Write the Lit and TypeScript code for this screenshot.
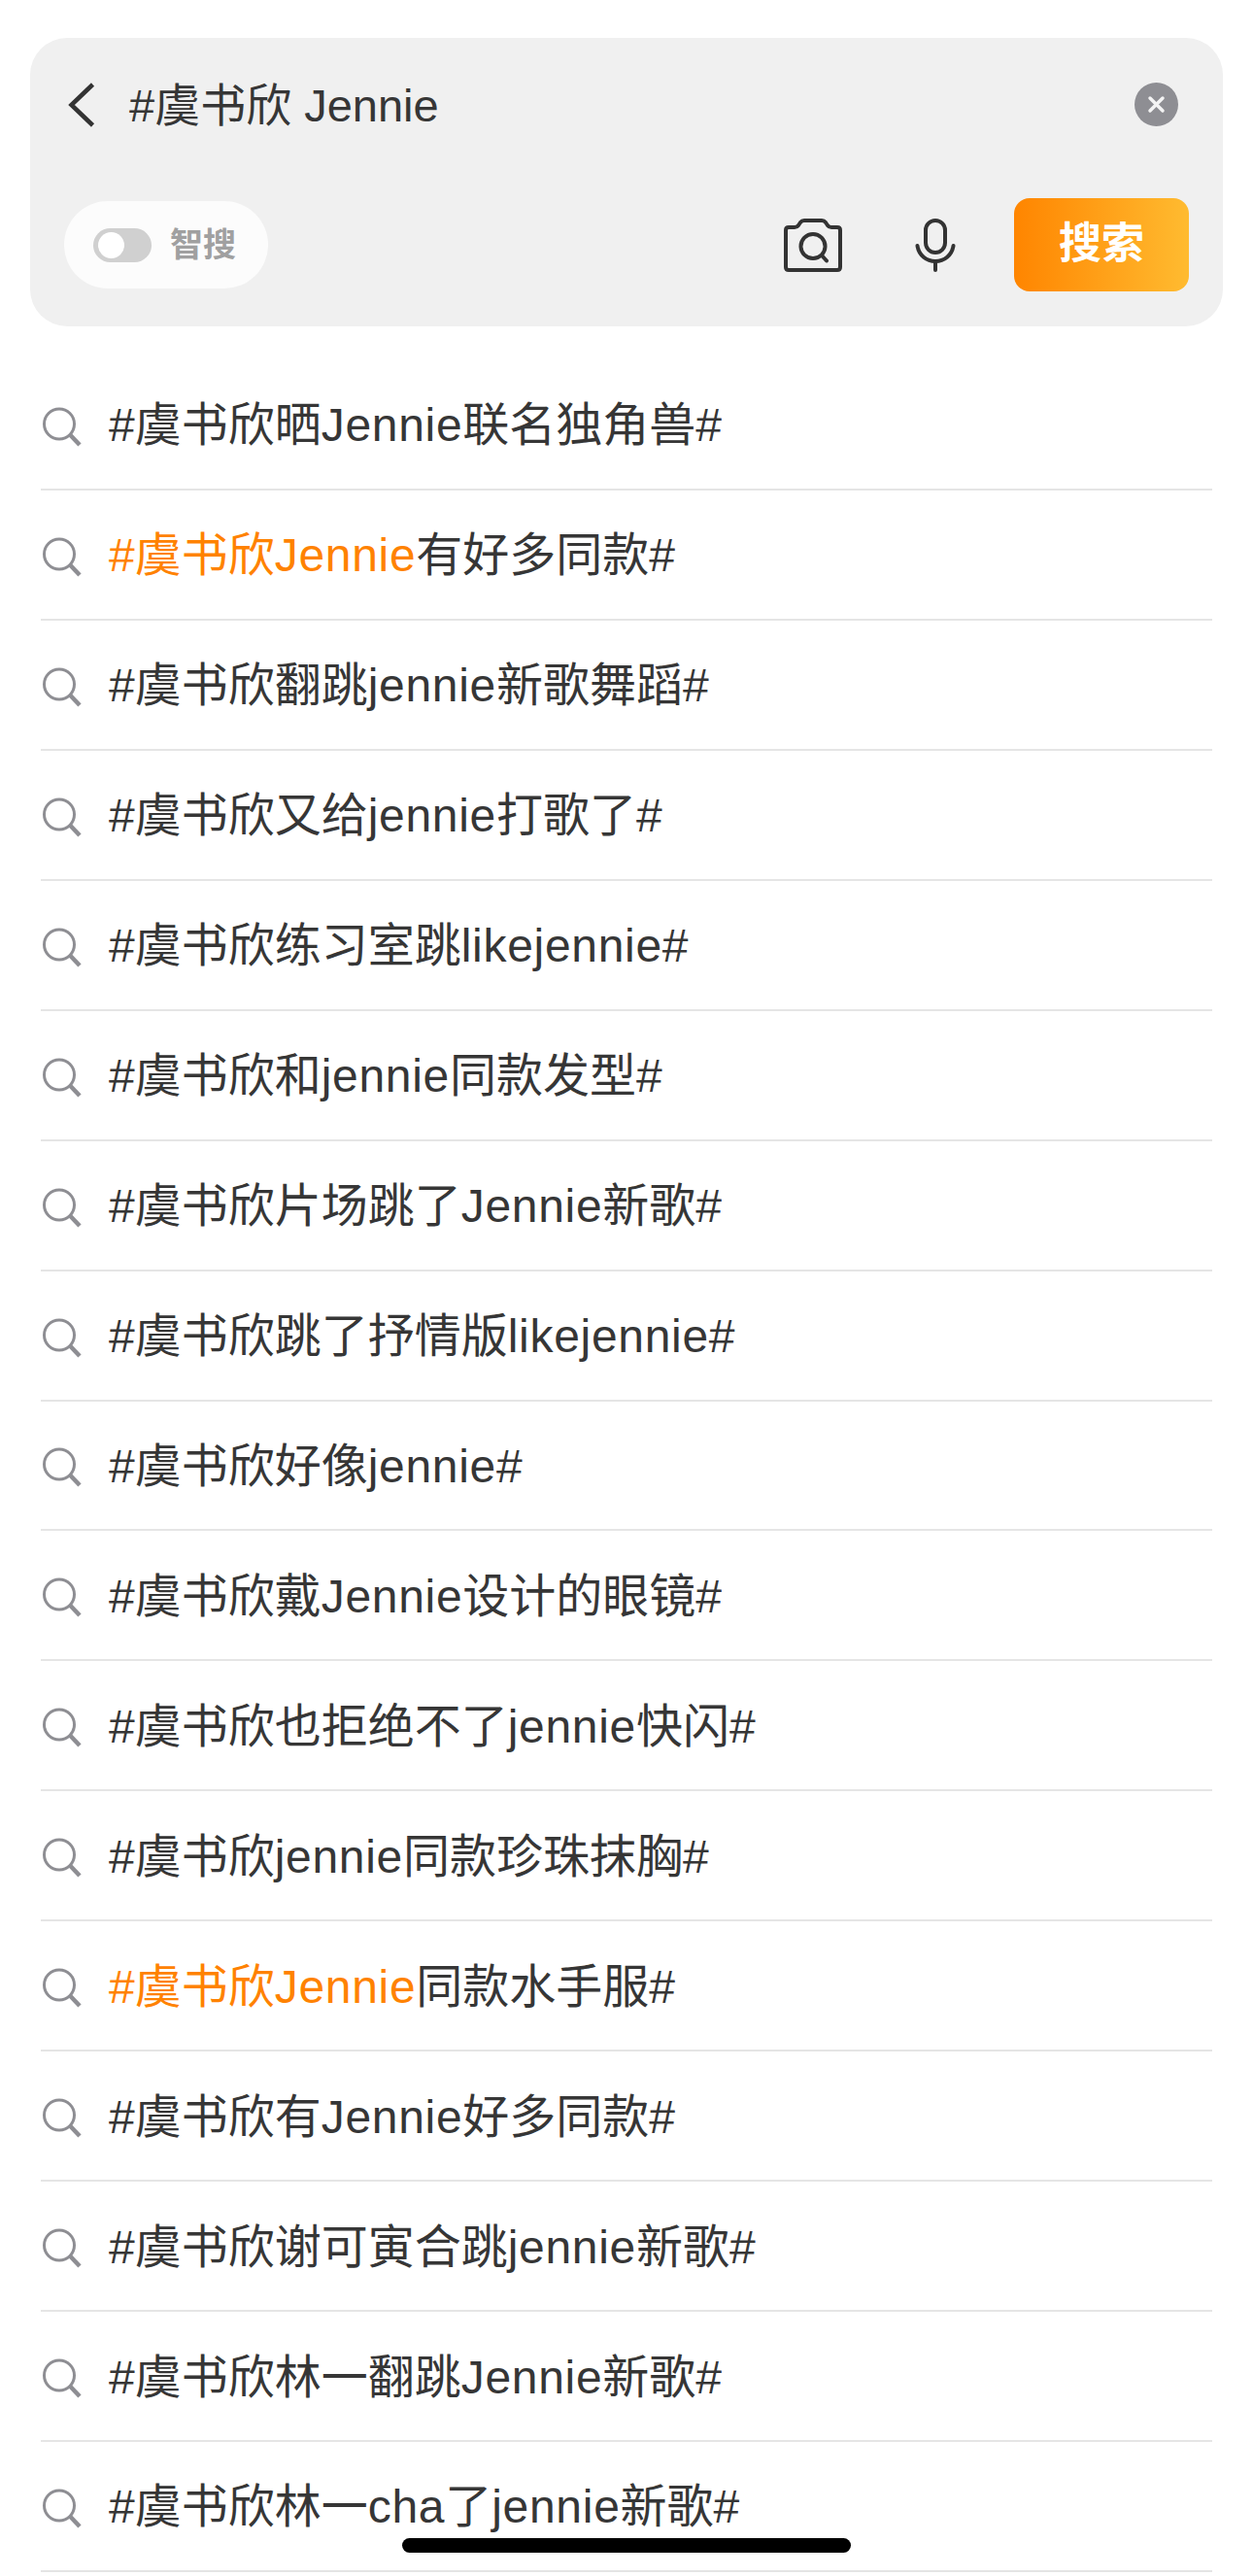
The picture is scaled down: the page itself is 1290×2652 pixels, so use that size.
import { LitElement, html, css, svg } from "lit";
import { customElement } from "lit/decorators.js";

type Item = { hi?: string; text: string };
const items: Item[] = [
  { text: "#虞书欣晒Jennie联名独角兽#" },
  { hi: "#虞书欣Jennie", text: "有好多同款#" },
  { text: "#虞书欣翻跳jennie新歌舞蹈#" },
  { text: "#虞书欣又给jennie打歌了#" },
  { text: "#虞书欣练习室跳likejennie#" },
  { text: "#虞书欣和jennie同款发型#" },
  { text: "#虞书欣片场跳了Jennie新歌#" },
  { text: "#虞书欣跳了抒情版likejennie#" },
  { text: "#虞书欣好像jennie#" },
  { text: "#虞书欣戴Jennie设计的眼镜#" },
  { text: "#虞书欣也拒绝不了jennie快闪#" },
  { text: "#虞书欣jennie同款珍珠抹胸#" },
  { hi: "#虞书欣Jennie", text: "同款水手服#" },
  { text: "#虞书欣有Jennie好多同款#" },
  { text: "#虞书欣谢可寅合跳jennie新歌#" },
  { text: "#虞书欣林一翻跳Jennie新歌#" },
  { text: "#虞书欣林一cha了jennie新歌#" },
];

const runs = (s: string) =>
  s.split(/([A-Za-z]+)/).map((p) => (/^[A-Za-z]+$/.test(p) ? html`<span class="latin">${p}</span>` : p));

const searchIcon = svg`<svg class="glass" width="42" height="42" viewBox="0 0 42 42" fill="none" stroke="#8e8e93" stroke-width="3">
  <circle cx="17" cy="17.500" r="15.500"/><path d="M28.500 29 L38 39" stroke-width="4.500"/></svg>`;

@customElement("app-root")
export class AppRoot extends LitElement {
  static styles = css`
    :host {
      display: block;
      position: relative;
      width: 1290px;
      height: 2652px;
      overflow: hidden;
      background: #fff;
      box-sizing: border-box;
      padding-top: 39px;
      font-family: "Liberation Sans", "Noto Sans CJK SC", sans-serif;
      color: #363636;
    }
    .panel {
      margin: 0 31px;
      height: 297px;
      box-sizing: border-box;
      padding: 46px 35px 36px;
      background: #f0f0f0;
      border-radius: 38px;
      display: flex;
      flex-direction: column;
      justify-content: space-between;
    }
    .top {
      display: flex;
      align-items: center;
      height: 45px;
    }
    .back { margin-left: 4px; flex: none; }
    .query {
      margin-left: 35px;
      padding-top: 2px;
      flex: 1;
      font-size: 47px;
      line-height: 45px;
      white-space: pre;
    }
    .clear { margin-right: 11px; flex: none; }
    .bottom {
      display: flex;
      align-items: center;
      height: 96px;
    }
    .pill {
      width: 210px;
      height: 90px;
      box-sizing: border-box;
      padding-left: 30px;
      border-radius: 45px;
      background: #fcfcfc;
      display: flex;
      align-items: center;
      gap: 19px;
    }
    .toggle {
      width: 60px;
      height: 35px;
      box-sizing: border-box;
      padding: 4px 5px;
      border-radius: 18px;
      background: #d0d0d0;
    }
    .knob {
      width: 27px;
      height: 27px;
      border-radius: 50%;
      background: #fff;
    }
    .pill-label {
      font-size: 34px;
      font-weight: 700;
      color: #a0a0a0;
      line-height: 40px;
    }
    .spacer { flex: 1; }
    .camera { flex: none; margin-right: 75px; }
    .mic { flex: none; margin-right: 60px; }
    .go {
      width: 180px;
      height: 96px;
      border-radius: 16px;
      background: linear-gradient(90deg, #ff8500, #ffbb30);
      color: #fff;
      font-size: 44px;
      font-weight: 700;
      line-height: 94px;
      text-align: center;
    }
    .list {
      margin: 35px 42px 0;
    }
    .row {
      height: 133.94px;
      box-sizing: border-box;
      border-bottom: 2px solid #e5e5e5;
      display: flex;
      align-items: center;
      padding-left: 2px;
    }
    .glass { flex: none; margin: 6px 26px 0 0; }
    .text {
      font-size: 48px;
      white-space: pre;
      line-height: 60px;
      padding-top: 3px;
    }
    .latin { letter-spacing: 0.7px; }
    .hi { color: #ff8200; }
    .home {
      position: absolute;
      left: 414px;
      top: 2613px;
      width: 462px;
      height: 15px;
      border-radius: 8px;
      background: #000;
    }
  `;

  render() {
    return html`
      <div class="panel">
        <div class="top">
          <svg class="back" width="28" height="46" viewBox="0 0 28 46" fill="none" stroke="#333" stroke-width="4.500">
            <path d="M25.500 2 L3.500 23 L25.500 44" />
          </svg>
          <div class="query">#虞书欣 Jennie</div>
          <svg class="clear" width="45" height="45" viewBox="0 0 45 45">
            <circle cx="22.500" cy="22.500" r="22.500" fill="#8e8e93" />
            <path d="M16 16 L29 29 M29 16 L16 29" stroke="#f4f4f4" stroke-width="3.500" stroke-linecap="round" />
          </svg>
        </div>
        <div class="bottom">
          <div class="pill">
            <div class="toggle"><div class="knob"></div></div>
            <div class="pill-label">智搜</div>
          </div>
          <div class="spacer"></div>
          <svg class="camera" width="60" height="55" viewBox="0 0 60 55" fill="none" stroke="#333" stroke-width="4" stroke-linejoin="round" stroke-linecap="round">
            <path d="M5 9 H11 Q13.500 9 15 7 L17 4 Q18.500 2 21 2 H39 Q41.500 2 43 4 L45 7 Q46.500 9 49 9 H55 Q58 9 58 12 V50 Q58 53 55 53 H5 Q2 53 2 50 V12 Q2 9 5 9 Z" />
            <circle cx="30" cy="28.500" r="12.500" />
            <path d="M39.500 38.500 L44 43.500" />
          </svg>
          <svg class="mic" width="42" height="55" viewBox="0 0 42 55" fill="none" stroke="#333" stroke-width="4" stroke-linecap="round">
            <rect x="11" y="2" width="20" height="33" rx="10" />
            <path d="M2.500 28 C4 38 12 44 21 44 C30 44 38 38 39.500 28" />
            <path d="M21 44 V53" />
          </svg>
          <div class="go">搜索</div>
        </div>
      </div>
      <div class="list">
        ${items.map(
          (it) => html`<div class="row">${searchIcon}<div class="text">${it.hi ? html`<span class="hi">${runs(it.hi)}</span>` : ""}${runs(it.text)}</div></div>`
        )}
      </div>
      <div class="home"></div>
    `;
  }
}
